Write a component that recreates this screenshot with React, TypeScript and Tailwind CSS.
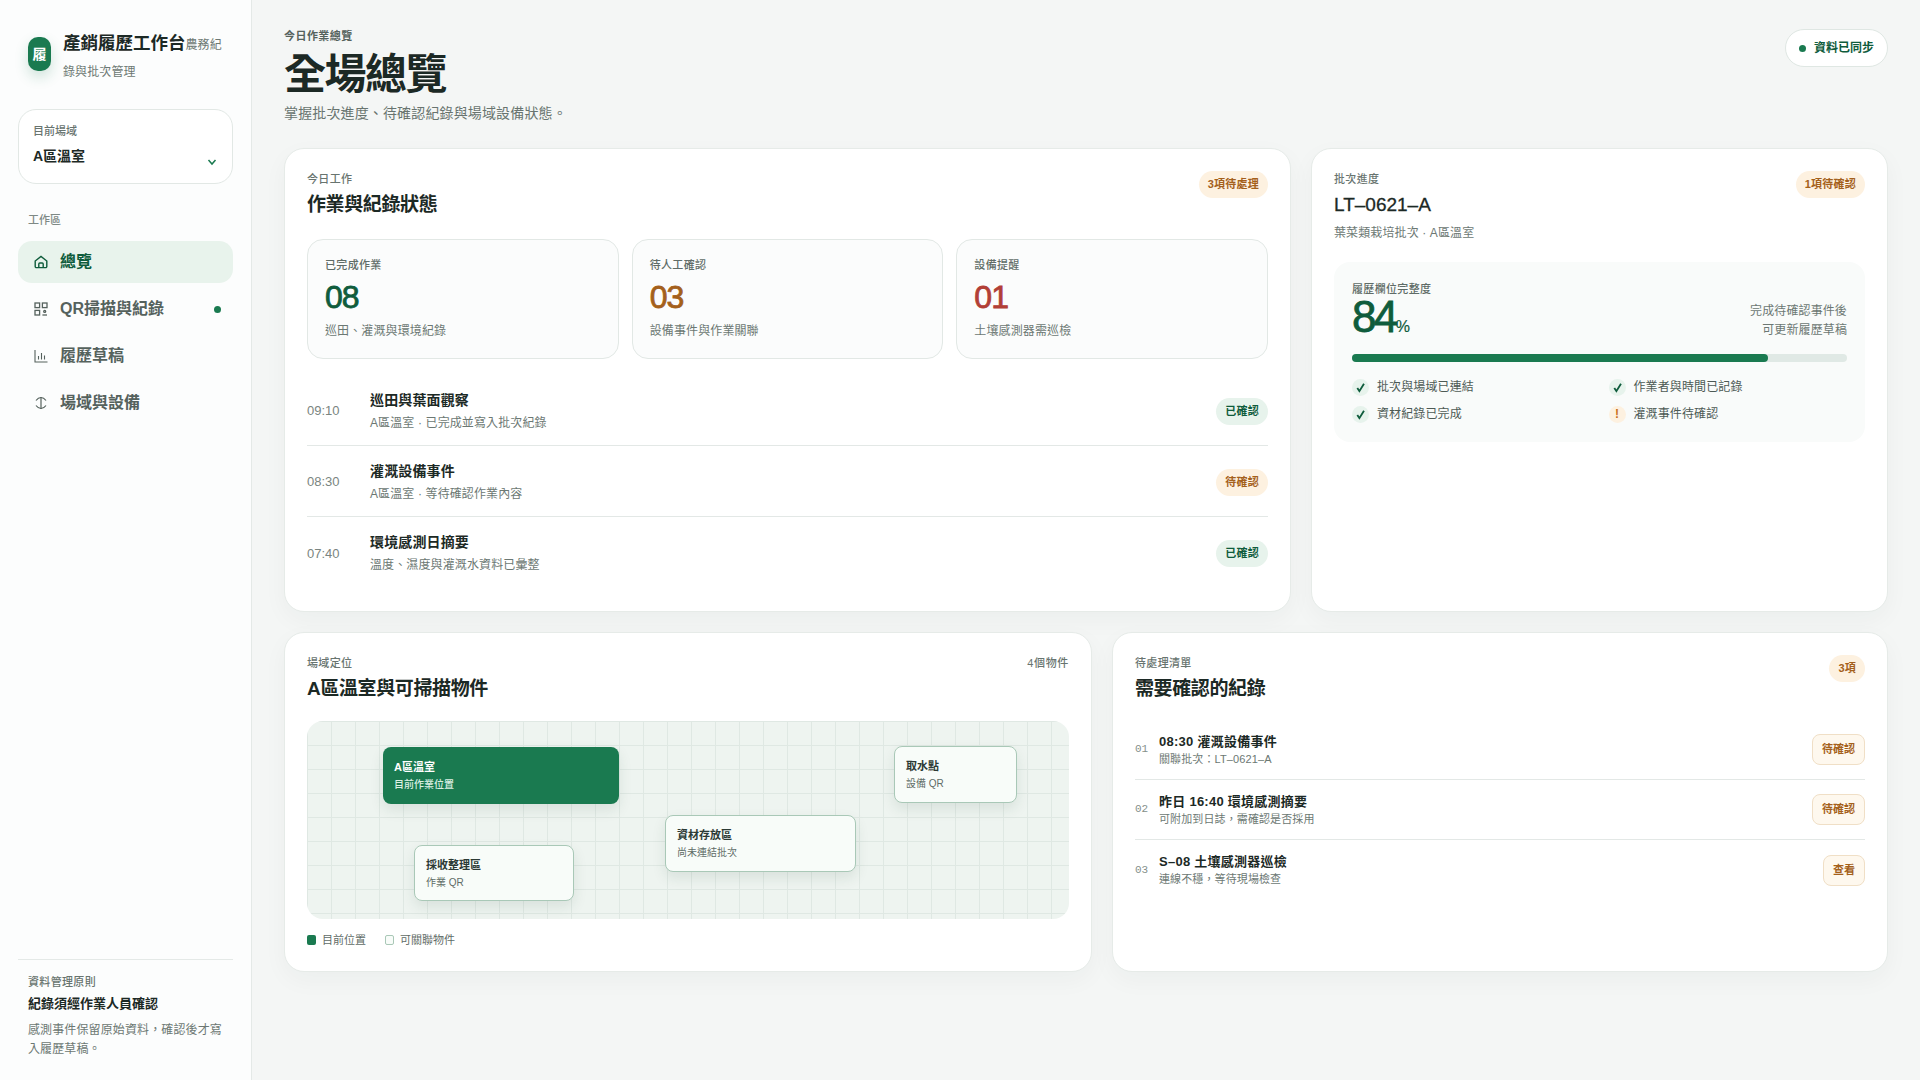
function Pill({ tone, children }: { tone: 'green' | 'amber'; children: React.ReactNode }) {
  return (
    <span className={`inline-flex h-[27px] items-center rounded-full px-[9px] text-[11px] font-semibold tracking-[0.02em] whitespace-nowrap ${tone === 'green' ? 'bg-[#e7f3ec] text-[#0f5c3c]' : 'bg-[#fdf1e0] text-[#a4601b]'}`}>
      {children}
    </span>
  );
}

function CardHead({ eyebrow, title, right, thin }: { eyebrow: string; title: string; right: React.ReactNode; thin?: boolean }) {
  return (
    <div className="flex items-start justify-between">
      <div>
        <div className="text-[11px] leading-[16px] font-medium tracking-[0.03em] text-[#68746f]">{eyebrow}</div>
        <div className={`mt-[5px] leading-[26px] text-[#1c2925] ${thin ? 'text-[19px] font-normal [-webkit-text-stroke:0.3px_currentColor]' : 'text-[19px] font-bold tracking-[-0.02em]'}`}>{title}</div>
      </div>
      {right}
    </div>
  );
}

function Stat({ label, value, desc, color }: { label: string; value: string; desc: string; color: string }) {
  return (
    <div className="h-[120px] rounded-[16px] border border-[#e2e8e5] bg-[#fbfcfc] px-[17px] pt-[17px]">
      <div className="text-[11px] leading-[16px] font-medium tracking-[0.03em] text-[#5f6c67]">{label}</div>
      <div className={`mt-[4px] text-[32px] leading-[40px] font-normal tracking-[-0.03em] [-webkit-text-stroke:0.8px_currentColor] ${color}`}>{value}</div>
      <div className="mt-[5px] text-[12px] leading-[18px] tracking-[0.01em] text-[#6c7873]">{desc}</div>
    </div>
  );
}

function WorkRow({ time, title, sub, tone, status, last }: { time: string; title: string; sub: string; tone: 'green' | 'amber'; status: string; last?: boolean }) {
  return (
    <div className={`flex h-[71px] items-center pt-[2px] ${last ? '' : 'border-b border-[#e3e8e6]'}`}>
      <div className="w-[63px] text-[13px] text-[#7a8580]">{time}</div>
      <div className="mb-[1px] flex-1">
        <div className="text-[14px] leading-[20px] font-bold tracking-[0.01em] text-[#1c2925]">{title}</div>
        <div className="mt-[4px] text-[12px] leading-[18px] tracking-[0.01em] text-[#6c7873]">{sub}</div>
      </div>
      <Pill tone={tone}>{status}</Pill>
    </div>
  );
}

function Check({ warn, children }: { warn?: boolean; children: React.ReactNode }) {
  return (
    <div className="flex items-center gap-[8px] text-[12px] leading-[18px] tracking-[0.01em] text-[#4d5a55]">
      <span className={`flex h-[17px] w-[17px] items-center justify-center rounded-full text-[12px] font-bold ${warn ? 'bg-[#fdf1e0] text-[#c8701c]' : 'bg-[#e7f3ec] text-[#0f5c3c]'}`}>
        {warn ? '!' : (
          <svg viewBox="0 0 12 12" className="h-[11px] w-[11px]" fill="none" stroke="currentColor" strokeWidth="2"><path d="M2.500 6.500 4.800 10 9.800 2" /></svg>
        )}
      </span>
      {children}
    </div>
  );
}

function MapNode({ pos, title, sub, active }: { pos: string; title: string; sub: string; active?: boolean }) {
  return (
    <div className={`absolute flex flex-col justify-center rounded-[8px] px-[11px] shadow-[0_6px_14px_rgba(30,70,50,0.1)] ${pos} ${active ? 'bg-[#1a7a50] text-white' : 'border border-[#a9c8b7] bg-[#f8fcf9] text-[#2c3a35]'}`}>
      <div className="text-[11px] leading-[16px] font-semibold">{title}</div>
      <div className={`mt-[2px] text-[10px] leading-[15px] ${active ? 'font-medium text-[#dcefe4]' : 'text-[#5f6c67]'}`}>{sub}</div>
    </div>
  );
}

function Todo({ no, title, sub, action, last }: { no: string; title: string; sub: string; action: string; last?: boolean }) {
  return (
    <div className={`flex h-[60px] items-center ${last ? '' : 'border-b border-[#e3e8e6]'}`}>
      <div className="w-[24px] font-['Liberation_Mono',monospace] text-[11px] text-[#84908a]">{no}</div>
      <div className="flex-1">
        <div className="text-[13px] leading-[19px] font-bold tracking-[0.02em] text-[#1c2925]">{title}</div>
        <div className="text-[11px] leading-[17px] tracking-[0.01em] text-[#6c7873]">{sub}</div>
      </div>
      <button className="flex h-[31px] items-center rounded-[8px] border border-[#f0dfc6] bg-[#fef8ee] px-[9px] text-[11px] font-semibold text-[#a4601b]">{action}</button>
    </div>
  );
}

const nav = [
  { label: '總覽', active: true, icon: <svg viewBox="0 0 16 16" className="h-[16px] w-[16px]" fill="none" stroke="currentColor" strokeWidth="1.4"><path d="M2.200 7 8 2.400 13.800 7v5.400a1.200 1.200 0 0 1-1.200 1.200H3.400a1.200 1.200 0 0 1-1.200-1.200V7Z" /><path d="M5.800 13.500V10a1 1 0 0 1 1-1h2.400a1 1 0 0 1 1 1v3.500" /></svg> },
  { label: 'QR掃描與紀錄', dot: true, icon: <svg viewBox="0 0 16 16" className="h-[16px] w-[16px]" fill="none" stroke="currentColor" strokeWidth="1.3"><rect x="2" y="2" width="4.600" height="4.600" /><rect x="9.400" y="2" width="4.600" height="4.600" /><rect x="2" y="9.400" width="4.600" height="4.600" /><circle cx="11.700" cy="10.400" r="1" /><path d="M9.400 14h4.600" /></svg> },
  { label: '履歷草稿', icon: <svg viewBox="0 0 16 16" className="h-[16px] w-[16px]" fill="none" stroke="currentColor" strokeWidth="1.1"><path d="M2 2v12h12.500" /><path d="M5.500 11.500V8M8.500 11.500V5M11.500 11.500V7.500" /></svg> },
  { label: '場域與設備', icon: <svg viewBox="0 0 16 16" className="h-[16px] w-[16px]" fill="none" stroke="currentColor" strokeWidth="1.200"><path d="M8 2v12" /><path d="M3 5.500C4.500 3.500 6 2.500 8 2.500s3.500 1 5 3" /><path d="M3 10.500c1.500 2 3 3 5 3s3.500-1 5-3" /></svg> },
];

export default function App() {
  return (
    <div className="flex min-h-[1080px] bg-[#f4f6f5] font-['Liberation_Sans','Noto_Sans_CJK_TC',sans-serif]">
      <aside className="flex w-[252px] shrink-0 flex-col border-r border-[#e4e9e7] bg-[#fcfdfd] px-[18px]">
        <div className="mt-[28px] flex h-[57px] gap-[12px] pl-[10px]">
          <div className="mt-[9px] flex h-[34px] w-[23px] shrink-0 items-center justify-center rounded-[10px] bg-[#1a7a50] text-[14px] font-bold text-white shadow-[0_6px_14px_rgba(26,122,80,0.2)]">履</div>
          <div className="w-[160px] pt-[3px] leading-[25px]">
            <strong className="text-[17.500px] font-bold text-[#1c2925]">產銷履歷工作台</strong>
            <span className="text-[12px] tracking-[0.01em] text-[#6c7873]">農務紀錄與批次管理</span>
          </div>
        </div>
        <div className="relative mt-[24px] h-[75px] rounded-[18px] border border-[#e2e8e5] bg-white px-[14px] pt-[13px]">
          <div className="text-[11px] leading-[16px] font-medium text-[#68746f]">目前場域</div>
          <div className="mt-[7px] text-[14px] leading-[20px] font-semibold text-[#1c2925]">A區溫室</div>
          <svg viewBox="0 0 10 10" className="absolute right-[15px] bottom-[16px] h-[10px] w-[10px]" fill="none" stroke="#1a7a50" strokeWidth="1.500"><path d="M1.500 3 5 7l3.500-4" /></svg>
        </div>
        <div className="mt-[28px] pl-[10px] text-[11px] leading-[16px] font-medium text-[#7e8985]">工作區</div>
        <nav className="mt-[13px] flex flex-col gap-[5px]">
          {nav.map((n) => (
            <div key={n.label} className={`flex h-[42px] items-center gap-[11px] rounded-[14px] pr-[12px] pl-[15px] text-[16px] font-semibold ${n.active ? 'bg-[#e8f3ec] text-[#0f5c3c]' : 'text-[#55625d]'}`}>
              {n.icon}
              <span className="flex-1">{n.label}</span>
              {n.dot && <span className="h-[7px] w-[7px] rounded-full bg-[#1a7a50]" />}
            </div>
          ))}
        </nav>
        <div className="mt-auto mb-[21px] border-t border-[#e4e9e7] px-[10px] pt-[14px]">
          <div className="text-[11px] leading-[16px] font-medium tracking-[0.03em] text-[#68746f]">資料管理原則</div>
          <div className="mt-[4px] text-[13px] leading-[20px] font-bold text-[#1c2925]">紀錄須經作業人員確認</div>
          <div className="mt-[7px] text-[12px] leading-[19px] tracking-[0.01em] text-[#6c7873]">感測事件保留原始資料，確認後才寫入履歷草稿。</div>
        </div>
      </aside>
      <main className="flex-1 pt-[28px] pr-[32px] pl-[32px]">
        <header className="flex items-start justify-between">
          <div>
            <div className="text-[11px] leading-[16px] font-semibold tracking-[0.04em] text-[#55625d]">今日作業總覽</div>
            <h1 className="mt-[6px] text-[42px] leading-[50px] font-bold tracking-[-0.035em] text-[#1c2925]">全場總覽</h1>
            <div className="mt-[3px] text-[14px] leading-[20px] tracking-[0.01em] text-[#68746f]">掌握批次進度、待確認紀錄與場域設備狀態。</div>
          </div>
          <div className="mt-[1px] flex h-[38px] items-center gap-[8px] rounded-full border border-[#dfe7e3] bg-white px-[13px] text-[12px] font-semibold text-[#0f5c3c]">
            <span className="h-[7px] w-[7px] rounded-full bg-[#1a7a50]" />資料已同步
          </div>
        </header>
        <div className="mt-[25px] grid grid-cols-[1007px_1fr] gap-[20px]">
          <section className="h-[464px] rounded-[20px] border border-[#e6ebe8] bg-white px-[22px] pt-[22px] shadow-[0_8px_24px_rgba(30,60,45,0.04)]">
            <CardHead eyebrow="今日工作" title="作業與紀錄狀態" right={<Pill tone="amber">3項待處理</Pill>} />
            <div className="mt-[21px] grid grid-cols-3 gap-[13px]">
              <Stat label="已完成作業" value="08" desc="巡田、灌溉與環境紀錄" color="text-[#0f5c3c]" />
              <Stat label="待人工確認" value="03" desc="設備事件與作業關聯" color="text-[#a4601b]" />
              <Stat label="設備提醒" value="01" desc="土壤感測器需巡檢" color="text-[#b23f36]" />
            </div>
            <div className="mt-[16px]">
              <WorkRow time="09:10" title="巡田與葉面觀察" sub="A區溫室 · 已完成並寫入批次紀錄" tone="green" status="已確認" />
              <WorkRow time="08:30" title="灌溉設備事件" sub="A區溫室 · 等待確認作業內容" tone="amber" status="待確認" />
              <WorkRow time="07:40" title="環境感測日摘要" sub="溫度、濕度與灌溉水資料已彙整" tone="green" status="已確認" last />
            </div>
          </section>
          <section className="h-[464px] rounded-[20px] border border-[#e6ebe8] bg-white px-[22px] pt-[22px] shadow-[0_8px_24px_rgba(30,60,45,0.04)]">
            <CardHead eyebrow="批次進度" title="LT–0621–A" thin right={<Pill tone="amber">1項待確認</Pill>} />
            <div className="mt-[6px] text-[12px] leading-[18px] tracking-[0.01em] text-[#6c7873]">葉菜類栽培批次 · A區溫室</div>
            <div className="mt-[20px] h-[180px] rounded-[16px] bg-[#f9fbfa] px-[18px] pt-[19px]">
              <div className="text-[11px] leading-[16px] font-medium tracking-[0.03em] text-[#5f6c67]">履歷欄位完整度</div>
              <div className="flex h-[44px] items-start justify-between">
                <div className="mt-[-3px] text-[44px] leading-[46px] font-normal tracking-[-0.06em] text-[#0f5c3c] [-webkit-text-stroke:0.8px_currentColor]">84<span className="text-[16px] tracking-normal [-webkit-text-stroke:0.2px_currentColor]">%</span></div>
                <div className="mt-[5px] text-right text-[12px] leading-[19px] tracking-[0.01em] text-[#6c7873]">完成待確認事件後<br />可更新履歷草稿</div>
              </div>
              <div className="mt-[13px] h-[8px] rounded-full bg-[#e0e9e5]">
                <div className="h-full rounded-full bg-[#1a7a50]" style={{ width: '84%' }} />
              </div>
              <div className="mt-[16px] grid grid-cols-2 gap-x-[18px] gap-y-[9px]">
                <Check>批次與場域已連結</Check>
                <Check>作業者與時間已記錄</Check>
                <Check>資材紀錄已完成</Check>
                <Check warn>灌溉事件待確認</Check>
              </div>
            </div>
          </section>
        </div>
        <div className="mt-[20px] grid grid-cols-[808px_1fr] gap-[20px]">
          <section className="h-[340px] rounded-[20px] border border-[#e6ebe8] bg-white px-[22px] pt-[22px] shadow-[0_8px_24px_rgba(30,60,45,0.04)]">
            <CardHead eyebrow="場域定位" title="A區溫室與可掃描物件" right={<span className="text-[11px] leading-[16px] font-medium tracking-[0.06em] text-[#68746f]">4個物件</span>} />
            <div className="relative mt-[19px] h-[198px] overflow-hidden rounded-[16px] bg-[#eef4f0] bg-[linear-gradient(#dfe8e3_1px,transparent_1px),linear-gradient(90deg,#dfe8e3_1px,transparent_1px)] bg-[size:24px_24px]">
              <MapNode pos="left-[76px] top-[26px] h-[57px] w-[236px]" title="A區溫室" sub="目前作業位置" active />
              <MapNode pos="left-[587px] top-[25px] h-[57px] w-[123px]" title="取水點" sub="設備 QR" />
              <MapNode pos="left-[358px] top-[94px] h-[57px] w-[191px]" title="資材存放區" sub="尚未連結批次" />
              <MapNode pos="left-[107px] top-[124px] h-[56px] w-[160px]" title="採收整理區" sub="作業 QR" />
            </div>
            <div className="mt-[13px] flex items-center text-[11px] leading-[16px] text-[#5f6c67]">
              <span className="mr-[6px] h-[10px] w-[9px] rounded-[2px] bg-[#1a7a50]" />目前位置
              <span className="mr-[6px] ml-[19px] h-[10px] w-[9px] rounded-[2px] border border-[#a9c8b7] bg-[#f8fcf9]" />可關聯物件
            </div>
          </section>
          <section className="h-[340px] rounded-[20px] border border-[#e6ebe8] bg-white px-[22px] pt-[22px] shadow-[0_8px_24px_rgba(30,60,45,0.04)]">
            <CardHead eyebrow="待處理清單" title="需要確認的紀錄" right={<Pill tone="amber">3項</Pill>} />
            <div className="mt-[18px]">
              <Todo no="01" title="08:30 灌溉設備事件" sub="關聯批次：LT–0621–A" action="待確認" />
              <Todo no="02" title="昨日 16:40 環境感測摘要" sub="可附加到日誌，需確認是否採用" action="待確認" />
              <Todo no="03" title="S–08 土壤感測器巡檢" sub="連線不穩，等待現場檢查" action="查看" last />
            </div>
          </section>
        </div>
      </main>
    </div>
  );
}
